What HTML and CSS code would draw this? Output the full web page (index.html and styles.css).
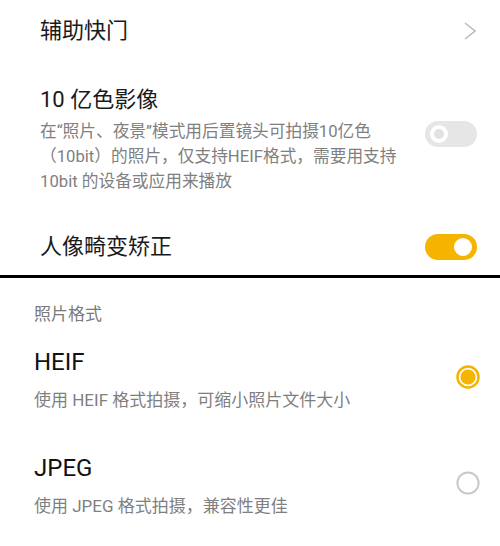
FILE: index.html
```html
<!DOCTYPE html>
<html lang="zh-CN">
<head>
<meta charset="utf-8">
<title>相机设置</title>
<link rel="stylesheet" href="styles.css">
</head>
<body>
<div class="page">
  <section class="upper">
    <div class="row row-nav">
      <span class="title">辅助快门</span>
      <svg class="chev" width="12" height="18" viewBox="0 0 12 18"><polyline points="1,1 11,9 1,17" fill="none" stroke="#b9b9b9" stroke-width="1.5" stroke-linejoin="miter"/></svg>
    </div>
    <div class="row row-desc">
      <div class="text">
        <div class="title">10 亿色影像</div>
        <div class="desc">在“照片、夜景”模式用后置镜头可拍摄10亿色<br>（10bit）的照片，仅支持HEIF格式，需要用支持<br>10bit 的设备或应用来播放</div>
      </div>
      <span class="switch off"><span class="knob"></span></span>
    </div>
    <div class="row row-switch">
      <span class="title">人像畸变矫正</span>
      <span class="switch on"><span class="knob"></span></span>
    </div>
  </section>
  <div class="divider"></div>
  <section class="lower">
    <div class="header">照片格式</div>
    <div class="option">
      <div class="text">
        <div class="opt-title">HEIF</div>
        <div class="opt-desc">使用 HEIF 格式拍摄，可缩小照片文件大小</div>
      </div>
      <svg class="radio" width="24" height="24" viewBox="0 0 24 24"><circle cx="12" cy="12" r="10.5" fill="none" stroke="#f5b400" stroke-width="2.5"/><circle cx="12" cy="12" r="7.6" fill="#f5b400"/></svg>
    </div>
    <div class="option">
      <div class="text">
        <div class="opt-title">JPEG</div>
        <div class="opt-desc">使用 JPEG 格式拍摄，兼容性更佳</div>
      </div>
      <svg class="radio" width="24" height="24" viewBox="0 0 24 24"><circle cx="12" cy="12" r="10.6" fill="none" stroke="#c9c9c9" stroke-width="2"/></svg>
    </div>
  </section>
</div>
</body>
</html>
```
FILE: styles.css
```css
html, body {
  margin: 0;
  padding: 0;
  background: #ffffff;
}
body {
  font-family: Roboto, "Noto Sans CJK SC", "Noto Sans", sans-serif;
  color: #1c1c1c;
}
.page {
  width: 500px;
}
.row {
  display: flex;
  justify-content: space-between;
}
.title {
  font-size: 22px;
  line-height: 30px;
  color: #1a1a1a;
}
.row-nav {
  height: 62px;
  align-items: center;
  padding: 0 24px 0 40px;
}
.chev {
  display: block;
}
.row-desc {
  align-items: flex-start;
  padding: 23px 23px 0 40px;
}
.desc {
  margin-top: 4px;
  font-size: 16.7px;
  line-height: 25px;
  color: #808080;
  white-space: nowrap;
}
.row-switch {
  align-items: center;
  padding: 38px 23px 13px 40px;
}
.switch {
  position: relative;
  display: block;
  width: 52px;
  height: 26px;
  border-radius: 13px;
  flex: none;
}
.switch.off {
  background: #e6e6e6;
  margin-top: 36px;
}
.switch.on {
  background: #f5b400;
}
.knob {
  position: absolute;
  top: 4px;
  width: 18px;
  height: 18px;
  border-radius: 50%;
  box-sizing: border-box;
}
.switch.off .knob {
  left: 5px;
  background: #e2e2e2;
  border: 4px solid #ffffff;
}
.switch.on .knob {
  right: 5px;
  background: #ffffff;
}
.divider {
  height: 3px;
  background: #000000;
}
.header {
  padding: 24px 0 0 34px;
  font-size: 17px;
  line-height: 24px;
  color: #7a7a7a;
}
.option {
  display: flex;
  align-items: center;
  justify-content: space-between;
  padding: 20px 20px 20px 34px;
}
.opt-title {
  font-size: 24px;
  line-height: 32px;
  color: #111111;
}
.opt-desc {
  margin-top: 10px;
  font-size: 17px;
  line-height: 24px;
  color: #7f7f7f;
}
.radio {
  display: block;
  margin-bottom: 4px;
  flex: none;
}
```
